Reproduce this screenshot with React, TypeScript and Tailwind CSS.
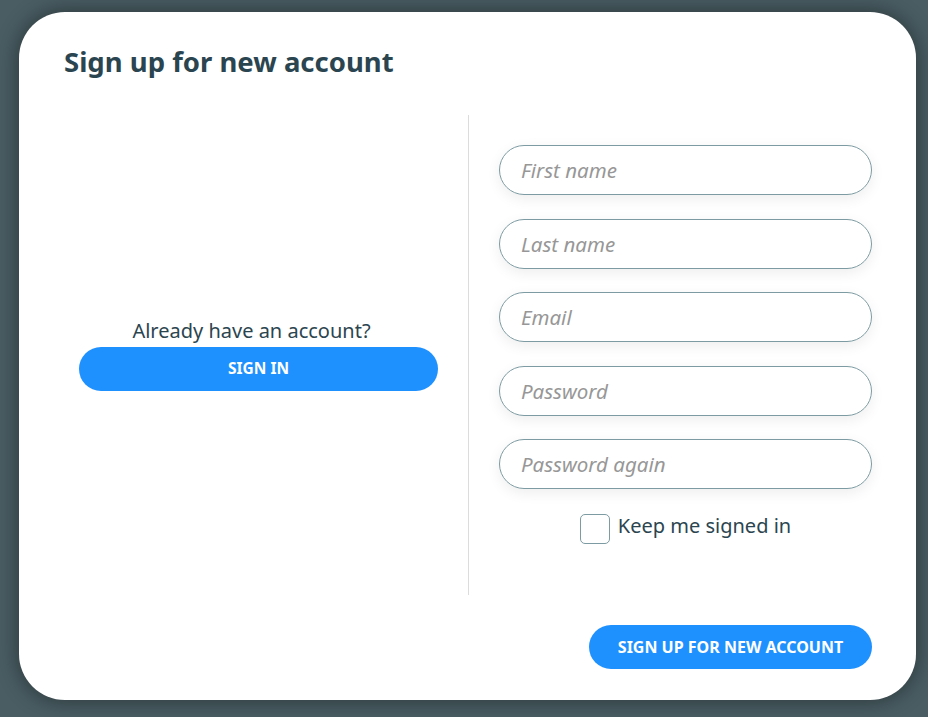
import { useState } from "react";

const fields = ["First name", "Last name", "Email", "Password", "Password again"];

export default function App() {
  const [keep, setKeep] = useState(false);

  return (
    <div
      className="h-screen w-full bg-[#495d63] pt-[12px] pl-[19px] pr-[12px] pb-[17px]"
      style={{ fontFamily: "'Noto Sans', sans-serif" }}
    >
      <div className="h-full bg-white rounded-[46px] shadow-[0_0_22px_rgba(0,0,0,0.45)] pl-[45px] pr-[44px] pt-[32px] flex flex-col">
        <h1 className="text-[27.5px] leading-[35px] font-bold text-[#2b4550]">
          Sign up for new account
        </h1>

        <div className="flex mt-[36px] h-[480px]">
          <div className="w-[389px] shrink-0 flex flex-col items-center justify-center">
            <p className="text-[20px] leading-[24px] text-[#2b4550] pr-[14px]">
              Already have an account?
            </p>
            <button className="w-[359px] h-[44px] mt-[4px] rounded-full bg-[#1f91ff] text-white text-[15.5px] font-bold uppercase">
              Sign in
            </button>
          </div>

          <div className="ml-[15px] w-px shrink-0 bg-[#dcdcdc]" />

          <div className="pl-[30px] pt-[30px] flex flex-col gap-[23.5px]">
            {fields.map((f) => (
              <input
                key={f}
                type={f.startsWith("Password") ? "password" : "text"}
                placeholder={f}
                className="w-[373px] h-[50px] rounded-full border border-[#7d9ba2] px-[21px] text-[20.5px] italic text-[#2b4550] placeholder:text-[#979797] outline-none shadow-[0_4px_14px_rgba(0,0,0,0.07)]"
              />
            ))}
            <label className="flex items-center justify-center gap-[8px] mt-[1px] cursor-pointer">
              <input
                type="checkbox"
                checked={keep}
                onChange={(e) => setKeep(e.target.checked)}
                className="appearance-none w-[30px] h-[30px] rounded-[5px] border border-[#7d9ba2] bg-white"
              />
              <span className="text-[20px] text-[#2b4550] -mt-[5px]">Keep me signed in</span>
            </label>
          </div>
        </div>

        <div className="flex justify-end mt-[30px]">
          <button className="w-[283px] h-[44px] rounded-full bg-[#1f91ff] text-white text-[16px] font-bold uppercase">
            Sign up for new account
          </button>
        </div>
      </div>
    </div>
  );
}
